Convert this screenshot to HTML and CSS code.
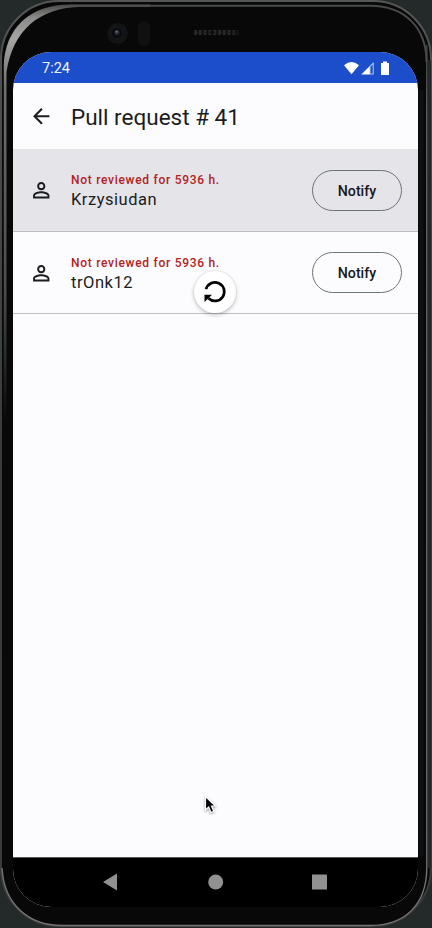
FILE: index.html
```html
<!DOCTYPE html>
<html lang="en">
<head>
<meta charset="utf-8">
<title>Pull request</title>
<link rel="stylesheet" href="styles.css">
</head>
<body>
<div class="device">
  <svg class="shell" viewBox="0 0 432 928" aria-hidden="true">
    <defs>
      <linearGradient id="rim" x1="0" y1="0" x2="0" y2="928" gradientUnits="userSpaceOnUse">
        <stop offset="0" stop-color="#555756"/><stop offset=".07" stop-color="#4c504f"/><stop offset=".5" stop-color="#353c3b"/><stop offset="1" stop-color="#3a3c3b"/>
      </linearGradient>
      <linearGradient id="shine" x1="0" y1="5" x2="0" y2="420" gradientUnits="userSpaceOnUse">
        <stop offset="0" stop-color="#4c4c4c"/><stop offset=".03" stop-color="#8a8a88"/><stop offset=".08" stop-color="#a5a5a3"/><stop offset=".2" stop-color="#6e6f6d"/><stop offset=".7" stop-color="#4a4b4a"/><stop offset="1" stop-color="#0a0a0b"/>
      </linearGradient>
      <linearGradient id="edge" x1="0" y1="30" x2="0" y2="926" gradientUnits="userSpaceOnUse">
        <stop offset="0" stop-color="#3c3d3d"/><stop offset=".1" stop-color="#686867"/><stop offset="1" stop-color="#757271"/>
      </linearGradient>
    </defs>
    <rect x="1" y="1" width="430" height="925" rx="58" fill="#080809" stroke="url(#rim)" stroke-width="2"/>
    <path d="M70 5.800H370C405 5.800 426.500 28 426.500 62" fill="none" stroke="#484a49" stroke-width="2"/>
    <path d="M3.800 420V66C5 28 30 4.500 70 4.500H150V6.800H82C38 7.500 13 31 6.500 72V420Z" fill="url(#shine)"/>
    <path d="M429.500 60V868" stroke="#242829" stroke-width="3"/>
    <path d="M426.800 45V868C426.500 905 405 925.500 370 925.500H62C28 925.500 4 904 2 868" fill="none" stroke="url(#edge)" stroke-width="1.400"/>
    <path d="M421 90V856" stroke="#0f1011" stroke-width="5"/>
    <circle cx="117.500" cy="33.500" r="10.500" fill="#131315"/>
    <circle cx="117" cy="33" r="6" fill="#0b0c10" stroke="#1b1c1f"/>
    <circle cx="117" cy="32.500" r="2.500" fill="#292d3b"/>
    <circle cx="116.500" cy="31.700" r="1" fill="#777d89"/>
    <rect x="139" y="22" width="10" height="23" rx="4" fill="#101011" stroke="#141416"/>
    <path d="M194 32.500H238" stroke="#29292b" stroke-width="5" stroke-dasharray="3 1.800"/>
    <path d="M193 32.500H239" stroke="#151517" stroke-width="2" stroke-dasharray="2 2"/>
  </svg>

  <main class="screen">
    <div class="status">
      <span class="time">7:24</span>
      <svg class="signals" width="47" height="16" viewBox="0 0 47 16" aria-hidden="true">
        <path d="M0 4.200Q7.500-2 15 4.200L7.500 13.200Z" fill="#fff"/>
        <path d="M17 13.500L29.700 1V13.500Z" fill="#b4cdf4"/>
        <path d="M18 13.300L25.500 6V13.300Z" fill="#fff"/>
        <path d="M26.500 5.500L28.700 3.400V12.500H26.500Z" fill="#1c4dca"/>
        <path d="M39 .5H43V2H45V14H37V2H39Z" fill="#fff"/>
      </svg>
    </div>
    <header class="bar">
      <svg class="icon" viewBox="0 0 24 24" aria-hidden="true"><path d="M20 11H7.830l5.590-5.590L12 4l-8 8 8 8 1.410-1.410L7.830 13H20v-2z"/></svg>
      <h1 class="title">Pull request # 41</h1>
    </header>
    <section class="list">
      <article class="row row-active">
        <svg class="icon" viewBox="0 0 24 24" aria-hidden="true"><path fill-rule="evenodd" d="M12 5.900a2.100 2.100 0 1 1 0 4.200 2.100 2.100 0 0 1 0-4.200m0 9c2.970 0 6.100 1.460 6.100 2.100v1.100H5.900V17c0-.64 3.130-2.100 6.100-2.100M12 4C9.790 4 8 5.790 8 8s1.790 4 4 4 4-1.790 4-4-1.790-4-4-4zm0 9c-2.670 0-8 1.340-8 4v3h16v-3c0-2.660-5.330-4-8-4z"/></svg>
        <div class="info"><span class="late">Not reviewed for 5936 h.</span><span class="name">Krzysiudan</span></div>
        <button class="notify">Notify</button>
      </article>
      <article class="row">
        <svg class="icon" viewBox="0 0 24 24" aria-hidden="true"><path fill-rule="evenodd" d="M12 5.900a2.100 2.100 0 1 1 0 4.200 2.100 2.100 0 0 1 0-4.200m0 9c2.970 0 6.100 1.460 6.100 2.100v1.100H5.900V17c0-.64 3.130-2.100 6.100-2.100M12 4C9.790 4 8 5.790 8 8s1.790 4 4 4 4-1.790 4-4-1.790-4-4-4zm0 9c-2.670 0-8 1.340-8 4v3h16v-3c0-2.660-5.330-4-8-4z"/></svg>
        <div class="info"><span class="late">Not reviewed for 5936 h.</span><span class="name">trOnk12</span></div>
        <button class="notify">Notify</button>
      </article>
    </section>
    <nav class="nav">
      <svg width="226" height="18" viewBox="0 0 226 18" aria-hidden="true"><path d="M0 9L14 .500V17.500Z"/><circle cx="112.700" cy="9" r="7.500"/><rect x="209" y="1.500" width="15" height="15" rx=".5"/></svg>
    </nav>
  </main>

  <div class="refresh">
    <svg width="42" height="42" viewBox="0 0 42 42" aria-hidden="true"><path d="M12 18.200A9.300 9.300 0 1 1 14.500 27.300" fill="none" stroke="#000" stroke-width="2.700"/><path d="M10.500 23.700H18L10.500 31Z"/></svg>
  </div>
  <svg class="pointer" width="14" height="20" viewBox="0 0 14 20" aria-hidden="true"><path d="M1.500 1.500V15L4.700 12L7 17.500L9.800 16.300L7.500 11H11.500Z" fill="#000" stroke="#fff" stroke-width="1.200"/></svg>
</div>
</body>
</html>
```

FILE: styles.css
```css
* { box-sizing: border-box; }
body { margin: 0; background: #242929; font-family: Roboto, "Liberation Sans", sans-serif; color: #1b1c1e; }
.device { position: relative; width: 432px; height: 928px; padding: 52px 14px 21px 13px; overflow: hidden; }
.shell { position: absolute; inset: 0; width: 432px; height: 928px; }
.screen { position: relative; display: flex; flex-direction: column; height: 855px; border-radius: 38px; overflow: hidden; background: #fcfcff; }
.status { display: flex; justify-content: space-between; align-items: center; flex: 0 0 31px; padding: 2px 27px 0 29px; background: #1c4dca; color: #eef4ff; }
.time { padding-top: 1px; font-size: 14.500px; line-height: 20px; }
.signals { display: block; }
.bar { display: flex; align-items: center; flex: 0 0 66px; padding-left: 16px; }
.icon { flex: 0 0 24.500px; width: 24.500px; height: 24.500px; fill: #1b1c1e; }
.title { margin: 1px 0 0 17.500px; font-size: 22.500px; line-height: 30px; font-weight: 400; white-space: nowrap; }
.list { flex: 1; }
.row { display: flex; align-items: center; height: 82.500px; padding: 1px 16px 0 16px; border-bottom: 1px solid #bcbdc0; }
.row-active { background: #e5e4e9; }
.info { display: flex; flex: 1; flex-direction: column; margin: 1px 0 0 17.500px; white-space: nowrap; }
.late { color: #b3221e; font-size: 12px; line-height: 19px; font-weight: 500; letter-spacing: .71px; }
.name { font-size: 16.500px; line-height: 20px; letter-spacing: .52px; }
.notify { width: 90px; height: 41px; border: 1px solid #6b7479; border-radius: 21px; padding: 1px 0 0; background: transparent; color: #17181a; font: 500 14.200px Roboto, sans-serif; }
.nav { display: flex; align-items: center; justify-content: center; flex: 0 0 50px; border-top: 1px solid #555457; padding-bottom: 1px; background: #000; fill: #919191; }
.refresh { position: absolute; left: 194px; top: 271px; width: 42px; height: 42px; border-radius: 50%; background: #fff; box-shadow: 0 2px 4px #0003, 0 0 3px #0002; }
.refresh svg, .pointer { display: block; }
.pointer { position: absolute; left: 204px; top: 795px; filter: drop-shadow(0 1px 1px #0006); }
```
